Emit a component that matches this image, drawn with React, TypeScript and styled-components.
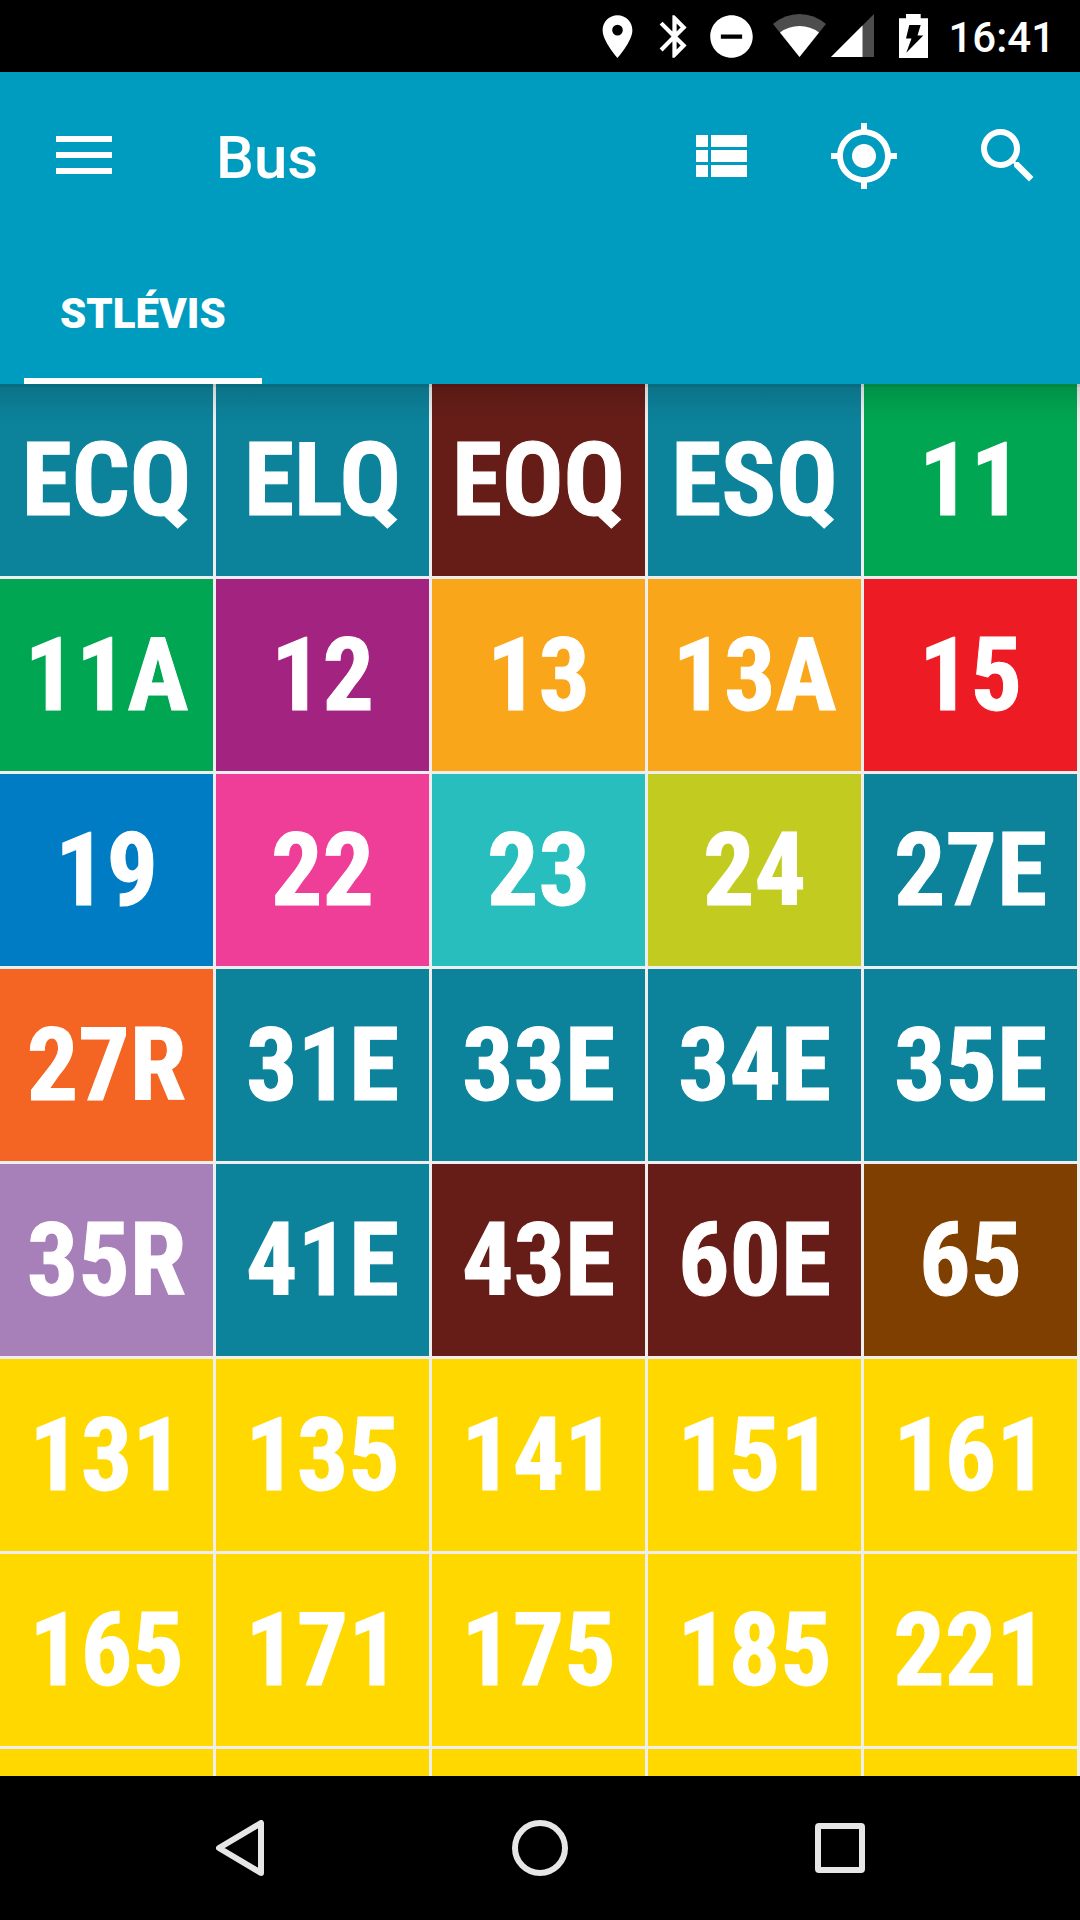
import React from 'react';
import styled, { createGlobalStyle } from 'styled-components';

const GlobalStyle = createGlobalStyle`
  *, *::before, *::after { box-sizing: border-box; }
  body { margin: 0; background: #000; font-family: Roboto, "Open Sans", sans-serif; }
  button { margin: 0; padding: 0; border: 0; background: none; color: inherit; cursor: pointer; }
`;

const Screen = styled.div`
  display: flex;
  flex-direction: column;
  height: 100vh;
  background: #eee;
  color: #fff;
`;

const StatusBar = styled.div`
  flex: none;
  display: flex;
  align-items: center;
  justify-content: flex-end;
  height: 72px;
  padding-right: 25px;
  background: #000;
`;

const StatusGroup = styled.div<{ $gap: number; $before?: number }>`
  display: flex;
  align-items: center;
  gap: ${(p) => p.$gap}px;
  margin-left: ${(p) => p.$before ?? 0}px;

  svg { display: block; }
`;

const Clock = styled.time`
  padding-top: 4px;
  font-size: 42px;
  font-weight: 500;
  line-height: 48px;
`;

const AppBar = styled.header`
  flex: none;
  background: #009cbf;
`;

const Toolbar = styled.div`
  display: flex;
  align-items: center;
  height: 168px;
`;

const IconButton = styled.button<{ $width: number }>`
  display: flex;
  align-items: center;
  justify-content: center;
  width: ${(p) => p.$width}px;
  height: 144px;

  svg { display: block; }
`;

const Title = styled.h1`
  flex: 1;
  margin: 0;
  padding: 4px 0 0 48px;
  font-size: 60px;
  font-weight: 500;
  line-height: 72px;
`;

const Tabs = styled.nav`
  display: flex;
  height: 144px;
  padding: 0 24px;
`;

const Tab = styled.button`
  padding: 10px 36px 0;
  border-bottom: 6px solid #fff;
  font: 900 42px/48px Roboto, "Open Sans", sans-serif;
  text-transform: uppercase;
`;

const Content = styled.main`
  position: relative;
  flex: 1;
  min-height: 0;
  overflow: hidden;

  &::before {
    content: "";
    position: absolute;
    inset: 0 0 auto;
    height: 42px;
    background: linear-gradient(
      rgba(0, 0, 0, 0.19) 3px,
      rgba(0, 0, 0, 0.12) 3px,
      rgba(0, 0, 0, 0.03) 26px,
      transparent
    );
    pointer-events: none;
  }
`;

const RouteGrid = styled.div`
  display: grid;
  grid-template-columns: repeat(5, 1fr);
  grid-auto-rows: 192px;
  gap: 3px;
  padding-right: 3px;
`;

const RouteTile = styled.button<{ $color: string }>`
  background: ${(p) => p.$color};
  font: 700 102px/120px "Roboto Condensed", Roboto, sans-serif;
  text-align: center;
  -webkit-text-stroke: 1px #fff;
`;

const NavBar = styled.nav`
  flex: none;
  display: flex;
  justify-content: center;
  height: 144px;
  background: #000;
  color: #e6e6e6;
`;

const TEAL = '#0c829b';
const MAROON = '#661d18';
const GREEN = '#00a651';
const AMBER = '#faa61a';
const YELLOW = '#ffd800';

const routes: [string, string][] = [
  ['ECQ', TEAL], ['ELQ', TEAL], ['EOQ', MAROON], ['ESQ', TEAL], ['11', GREEN],
  ['11A', GREEN], ['12', '#a32381'], ['13', AMBER], ['13A', AMBER], ['15', '#ed1c24'],
  ['19', '#007cc5'], ['22', '#ef3e98'], ['23', '#28bebe'], ['24', '#c2cc20'], ['27E', TEAL],
  ['27R', '#f46523'], ['31E', TEAL], ['33E', TEAL], ['34E', TEAL], ['35E', TEAL],
  ['35R', '#a77fb9'], ['41E', TEAL], ['43E', MAROON], ['60E', MAROON], ['65', '#7f3f00'],
  ['131', YELLOW], ['135', YELLOW], ['141', YELLOW], ['151', YELLOW], ['161', YELLOW],
  ['165', YELLOW], ['171', YELLOW], ['175', YELLOW], ['185', YELLOW], ['221', YELLOW],
  ['', YELLOW], ['', YELLOW], ['', YELLOW], ['', YELLOW], ['', YELLOW],
];

function Glyph({ d, size }: { d: string; size: number }) {
  return (
    <svg width={size} height={size} viewBox="0 0 24 24" fill="currentColor" aria-hidden="true">
      <path d={d} />
    </svg>
  );
}

const PLACE = 'M12 2C8.13 2 5 5.13 5 9c0 5.25 7 13 7 13s7-7.75 7-13c0-3.87-3.13-7-7-7zm0 9.5a2.5 2.5 0 0 1 0-5 2.5 2.5 0 0 1 0 5z';
const BLUETOOTH = 'M17.71 7.71L12 2h-1v7.59L6.41 5 5 6.41 10.59 12 5 17.59 6.41 19 11 14.41V22h1l5.71-5.71-4.3-4.29 4.3-4.29zM13 5.83l1.88 1.88L13 9.59V5.83zm1.88 10.46L13 18.17v-3.76l1.88 1.88z';
const DO_NOT_DISTURB = 'M12 2C6.48 2 2 6.48 2 12s4.48 10 10 10 10-4.48 10-10S17.52 2 12 2zm5 11H7v-2h10v2z';
const VIEW_LIST = 'M4 14h4v-4H4v4zm0 5h4v-4H4v4zM4 9h4V5H4v4zm5 5h12v-4H9v4zm0 5h12v-4H9v4zM9 5v4h12V5H9z';
const MY_LOCATION = 'M12 8c-2.21 0-4 1.79-4 4s1.79 4 4 4 4-1.79 4-4-1.79-4-4-4zm8.94 3A8.994 8.994 0 0 0 13 3.06V1h-2v2.06A8.994 8.994 0 0 0 3.06 11H1v2h2.06A8.994 8.994 0 0 0 11 20.94V23h2v-2.06A8.994 8.994 0 0 0 20.94 13H23v-2h-2.06zM12 19c-3.87 0-7-3.13-7-7s3.13-7 7-7 7 3.13 7 7-3.13 7-7 7z';
const SEARCH = 'M15.5 14h-.79l-.28-.27A6.471 6.471 0 0 0 16 9.5 6.5 6.5 0 1 0 9.5 16c1.61 0 3.09-.59 4.23-1.57l.27.28v.79l5 4.99L20.49 19l-4.99-5zm-6 0C7.01 14 5 11.99 5 9.5S7.01 5 9.5 5 14 7.01 14 9.5 11.99 14 9.5 14z';

export default function App() {
  return (
    <Screen>
      <GlobalStyle />
      <StatusBar>
        <StatusGroup $gap={6}>
          <Glyph d={PLACE} size={51} />
          <Glyph d={BLUETOOTH} size={51} />
          <Glyph d={DO_NOT_DISTURB} size={51} />
        </StatusGroup>
        <StatusGroup $gap={5} $before={16}>
          <svg width="53" height="44" viewBox="0 0 53 44" aria-hidden="true">
            <path d="M0 10Q12 0 26.5 0T53 10L26.5 43Z" fill="#4d4d4d" />
            <path d="M7 18.5Q15.5 12 26.5 12T46 18.5L26.5 43Z" fill="#fff" />
          </svg>
          <svg width="43" height="44" viewBox="0 0 43 44" aria-hidden="true">
            <path d="M0 43H43V0Z" fill="#4d4d4d" />
            <path d="M0 43H31.5V11.5Z" fill="#fff" />
          </svg>
        </StatusGroup>
        <StatusGroup $gap={20} $before={25}>
          <svg width="29" height="44" viewBox="0 0 29 44" aria-hidden="true">
            <path d="M7 0H21.7V4.3H29V44H0V4.3H7Z" fill="#fff" />
            <path d="M10.3 11H21.7L18.5 21.5H24.3L7.3 38.7L12.5 24.5H7Z" fill="#000" />
          </svg>
          <Clock>16:41</Clock>
        </StatusGroup>
      </StatusBar>

      <AppBar>
        <Toolbar>
          <IconButton $width={168} aria-label="Menu">
            <svg width="56" height="40" viewBox="0 0 56 40" fill="currentColor" aria-hidden="true">
              <path d="M0 0H56V6H0ZM0 16H56V22H0ZM0 32H56V38H0Z" />
            </svg>
          </IconButton>
          <Title>Bus</Title>
          <IconButton $width={144} aria-label="List view"><Glyph d={VIEW_LIST} size={72} /></IconButton>
          <IconButton $width={144} aria-label="My location"><Glyph d={MY_LOCATION} size={72} /></IconButton>
          <IconButton $width={144} aria-label="Search"><Glyph d={SEARCH} size={72} /></IconButton>
        </Toolbar>
        <Tabs>
          <Tab>STLévis</Tab>
        </Tabs>
      </AppBar>

      <Content>
        <RouteGrid>
          {routes.map(([label, color], i) => (
            <RouteTile key={i} $color={color}>{label}</RouteTile>
          ))}
        </RouteGrid>
      </Content>

      <NavBar>
        <IconButton $width={300} aria-label="Back">
          <svg width="48" height="56" viewBox="0 0 48 56" fill="none" stroke="currentColor" strokeWidth="6" strokeLinejoin="round" aria-hidden="true">
            <path d="M3 28L45 3V53Z" />
          </svg>
        </IconButton>
        <IconButton $width={300} aria-label="Home">
          <svg width="56" height="56" viewBox="0 0 56 56" fill="none" stroke="currentColor" strokeWidth="6" aria-hidden="true">
            <circle cx="28" cy="28" r="25" />
          </svg>
        </IconButton>
        <IconButton $width={300} aria-label="Recent apps">
          <svg width="50" height="50" viewBox="0 0 50 50" fill="none" stroke="currentColor" strokeWidth="6" aria-hidden="true">
            <rect x="3" y="3" width="44" height="44" rx="1" />
          </svg>
        </IconButton>
      </NavBar>
    </Screen>
  );
}
